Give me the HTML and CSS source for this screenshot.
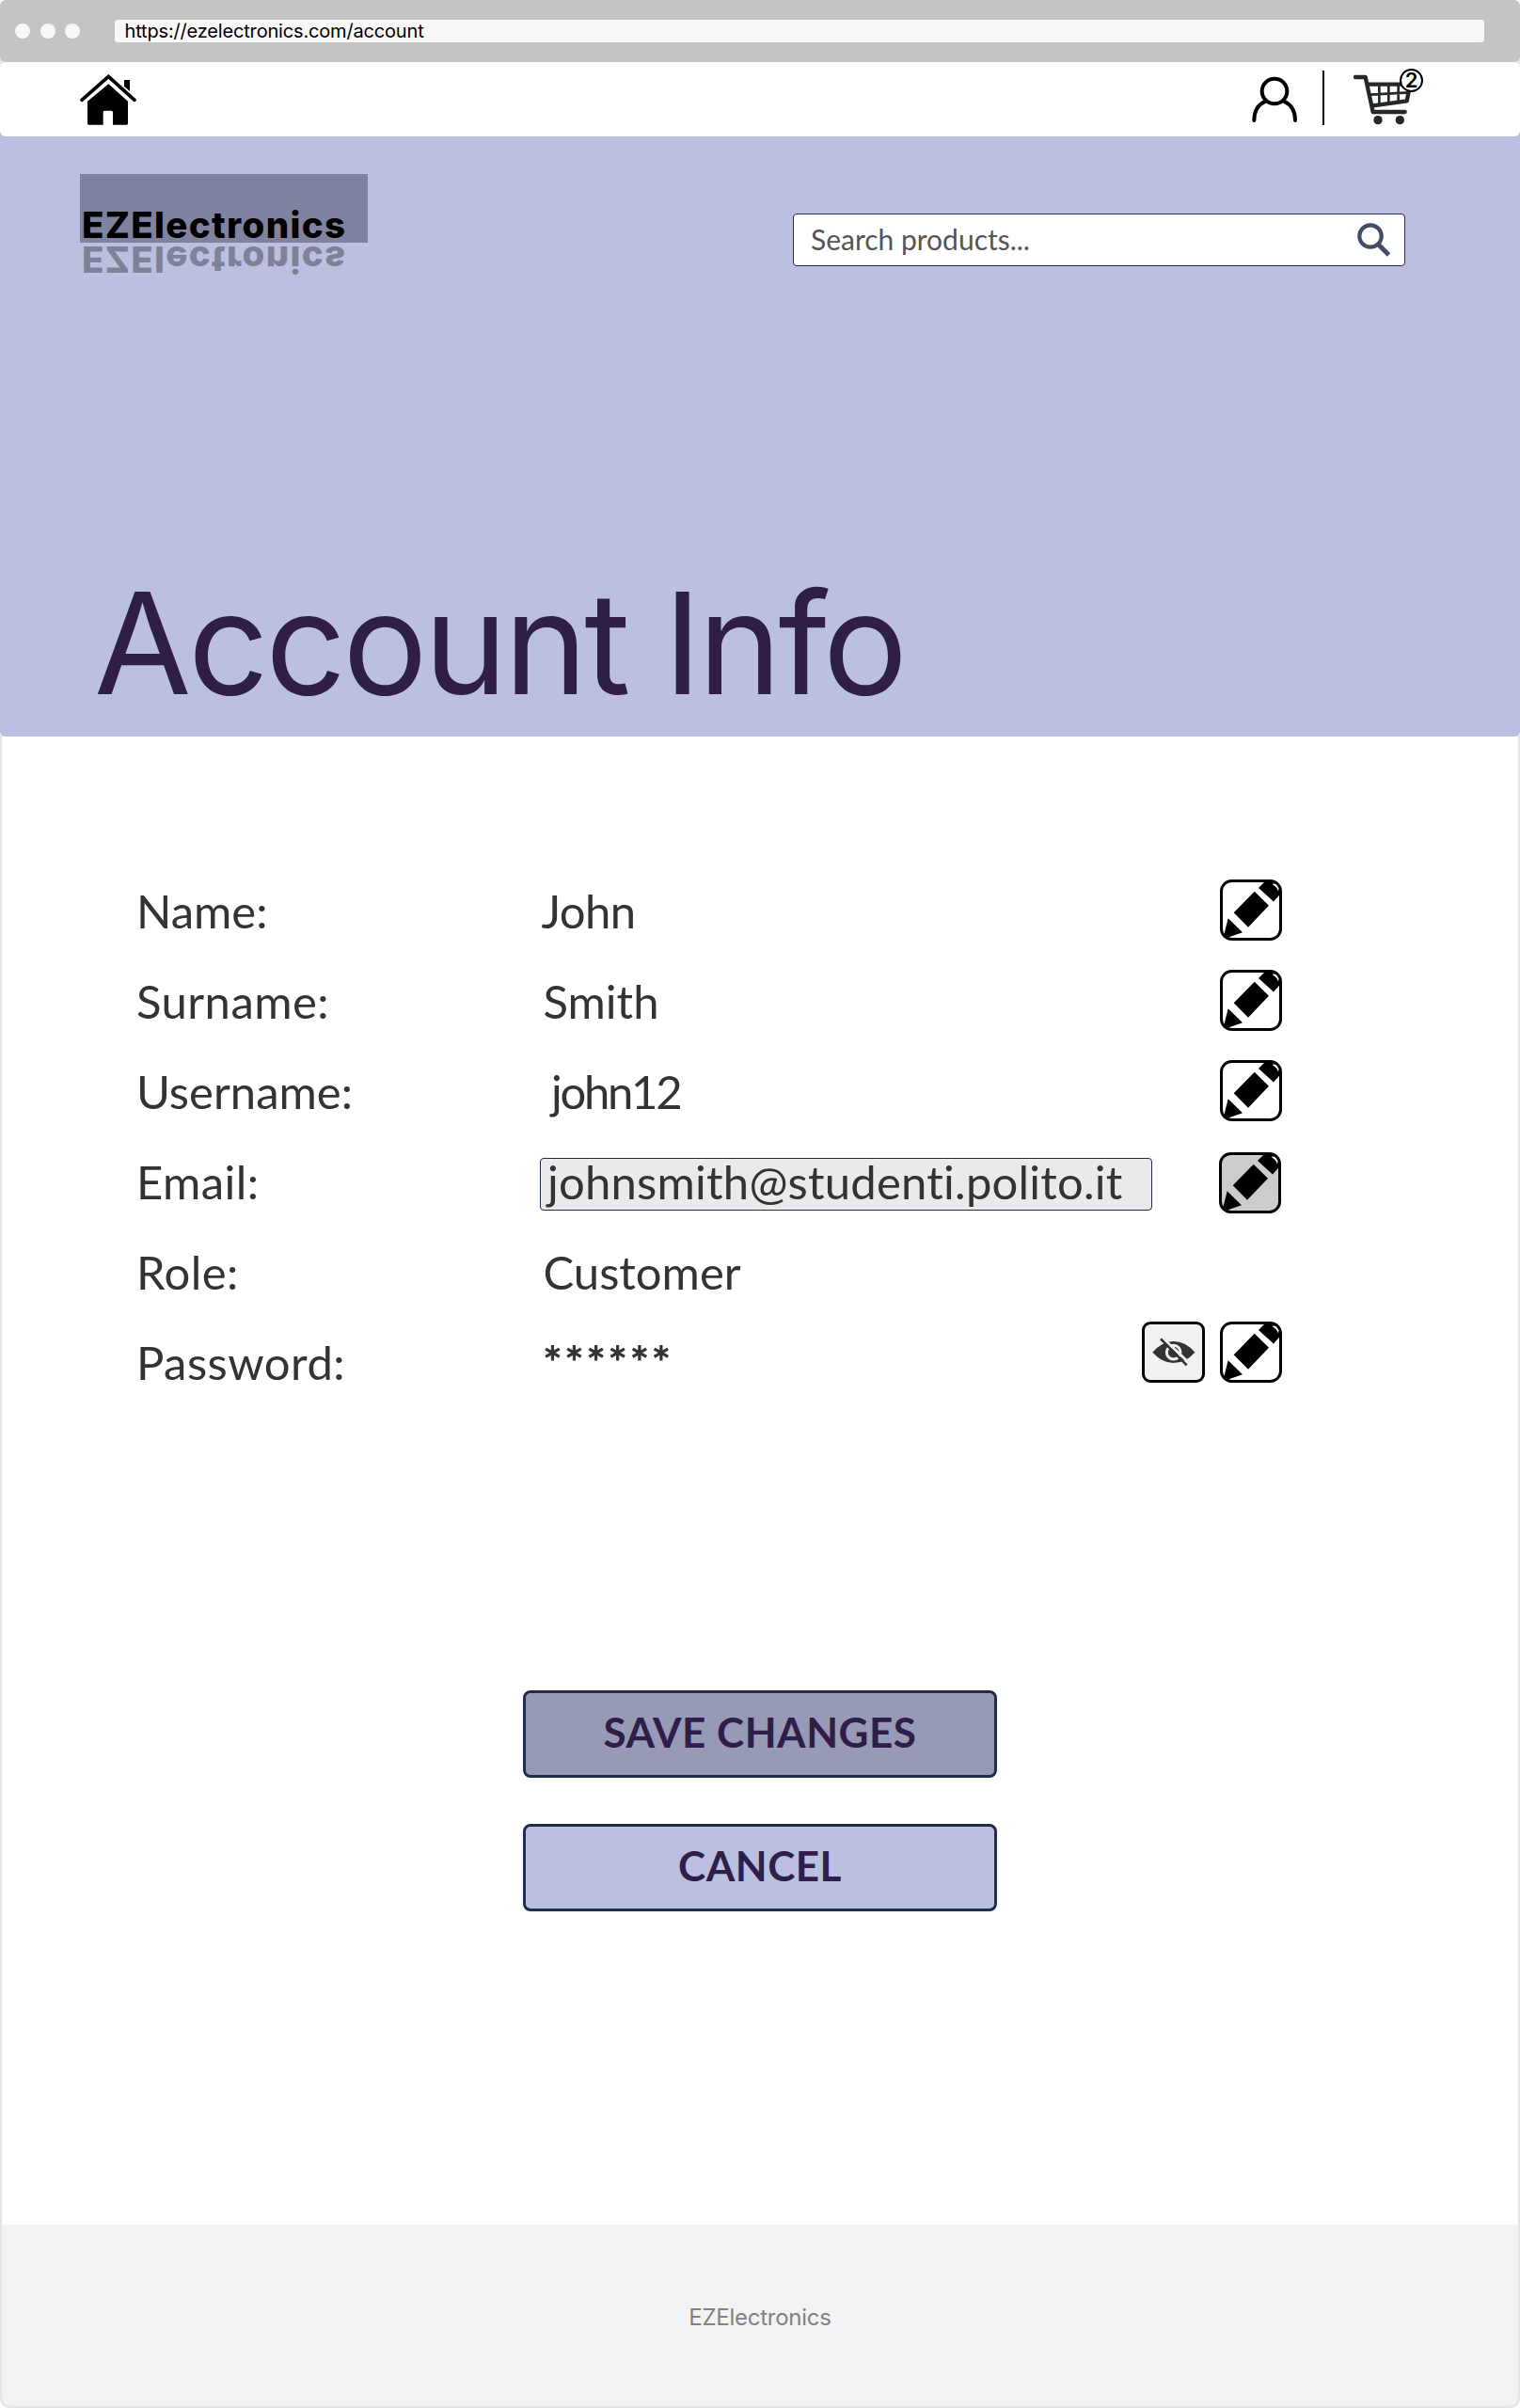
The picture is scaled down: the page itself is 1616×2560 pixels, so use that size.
FILE: index.html
```
<!DOCTYPE html>
<html lang="en">
<head>
<meta charset="utf-8">
<title>Account Info</title>
<link rel="stylesheet" href="styles.css">
</head>
<body>
<svg class="defs" width="0" height="0" aria-hidden="true">
  <symbol id="pencil" viewBox="0 0 66 65">
    <clipPath id="frame"><rect x="1.5" y="1.5" width="63" height="62" rx="11"/></clipPath>
    <g clip-path="url(#frame)">
      <path d="M36.7 12.7 52 27.7 30 50.7 14.7 35.3Z"/>
      <path d="M8.7 41.3 24 56.3 3 63.5Z"/>
      <path d="M50 0 41 9 57 23.500 65 14.500 65 14 59 4.500Z"/>
    </g>
    <path d="M55.500 5 Q60.500 7.500 62 12.500 L63 8 60 4Z" fill="#fff"/>
    <rect x="1.5" y="1.5" width="63" height="62" rx="11" fill="none" stroke="#000" stroke-width="3"/>
  </symbol>
</svg>
<div class="window">
  <header class="chrome">
    <div class="dots"><i></i><i></i><i></i></div>
    <div class="url">https://ezelectronics.com/account</div>
  </header>
  <div class="screen">
    <nav class="nav">
      <a class="home" aria-label="Home">
        <svg width="60" height="54" viewBox="255 237 180 162">
          <path d="M396 255h18v36l-18-15z"/>
          <path d="M261 319 346 244 429 319" fill="none" stroke="#000" stroke-width="11" stroke-linecap="round"/>
          <path d="M346 268 408 323V394q0 4-4 4H360V358q0-5-5-5H334q-5 0-5 5V398H283q-4 0-4-4V323Z"/>
        </svg>
      </a>
      <svg class="user" width="48" height="50" viewBox="94 240 144 150" fill="none" stroke="#000" stroke-width="12" stroke-linecap="round">
        <circle cx="166" cy="288" r="40"/>
        <path d="M101 381C101 350 115 330 137 320M232 381C232 350 218 330 196 320"/>
      </svg>
      <span class="divider"></span>
      <div class="cart">
        <svg width="62" height="54" viewBox="416 237 186 162" fill="none" stroke="#24282a">
          <path d="M422 246H454L478 357H580" stroke-width="13" stroke-linecap="round" stroke-linejoin="round"/>
          <path d="M460 269H597L586 322 478 337" stroke-width="13" stroke-linejoin="round"/>
          <path d="M498 270V330M528 270V325M559 270V322M468 302 592 295" stroke-width="8"/>
          <g fill="#24282a" stroke="none"><circle cx="494" cy="383" r="14"/><circle cx="564" cy="383" r="14"/></g>
        </svg>
        <span class="badge">2</span>
      </div>
    </nav>
    <section class="hero">
      <div class="hero-top">
        <div class="logo">
          <div class="logo-box">EZElectronics</div>
          <div class="logo-mirror" aria-hidden="true">EZElectronics</div>
        </div>
        <div class="search">
          <span>Search products...</span>
          <svg width="36" height="36" viewBox="0 0 36 36" fill="none" stroke="#414d66" stroke-width="4.2">
            <circle cx="14" cy="14" r="11.700"/><path d="M22 22.500 33.500 34" stroke-width="5"/>
          </svg>
        </div>
      </div>
      <h1>Account Info</h1>
    </section>
    <main>
      <dl class="fields">
        <div class="row"><dt>Name:</dt><dd class="first">John</dd><button class="edit" aria-label="Edit name"><svg><use href="#pencil"/></svg></button></div>
        <div class="row"><dt class="loose">Surname:</dt><dd>Smith</dd><button class="edit" aria-label="Edit surname"><svg><use href="#pencil"/></svg></button></div>
        <div class="row"><dt>Username:</dt><dd class="username">john12</dd><button class="edit" aria-label="Edit username"><svg><use href="#pencil"/></svg></button></div>
        <div class="row"><dt class="loose">Email:</dt><dd class="field">johnsmith@studenti.polito.it</dd><button class="edit active" aria-label="Edit email"><svg><use href="#pencil"/></svg></button></div>
        <div class="row"><dt class="loose">Role:</dt><dd>Customer</dd></div>
        <div class="row password"><dt class="loose">Password:</dt><dd class="mask">******</dd>
          <button class="reveal" aria-label="Show password">
            <svg width="46" height="31" viewBox="134 636 138 93">
              <path d="M135 683Q166 648 202 648 240 648 270 683 240 717 202 717 166 717 135 683Z" fill="#333"/>
              <circle cx="202" cy="683" r="22" fill="none" stroke="#f0f2f2" stroke-width="9"/>
              <path d="M161 632 252 717" stroke="#f0f2f2" stroke-width="9"/>
              <path d="M161 640 244 724" stroke="#333" stroke-width="8"/>
            </svg>
          </button>
          <button class="edit" aria-label="Edit password"><svg><use href="#pencil"/></svg></button></div>
      </dl>
      <div class="actions">
        <button class="btn pressed">SAVE CHANGES</button>
        <button class="btn">CANCEL</button>
      </div>
    </main>
    <footer>EZElectronics</footer>
  </div>
</div>
</body>
</html>
```
FILE: styles.css
```
* { box-sizing: border-box; margin: 0; padding: 0; }
body { background: #fff; color: #000; font-family: Inter, sans-serif; }
svg { display: block; }
button { font: inherit; background: none; border: 0; }
.defs { position: absolute; }

.window { width: 1616px; height: 2560px; background: #e5e5e5; border-radius: 6px 6px 10px 10px; overflow: hidden; display: flex; flex-direction: column; }
.chrome { height: 66px; background: #c4c4c4; border-radius: 6px; display: flex; align-items: center; padding: 0 38px 0 16px; flex: none; }
.dots { display: flex; gap: 10.500px; width: 106px; }
.dots i { width: 16px; height: 16px; border-radius: 50%; background: #f8f8f8; }
.url { flex: 1; height: 24px; border-radius: 3px; background: #f8f8f8; padding-left: 10.500px; font-size: 20px; line-height: 24px; letter-spacing: -.17px; }

.screen { flex: 1; display: flex; flex-direction: column; }
.nav { height: 79px; background: #fff; border-radius: 6px; box-shadow: 0 6px 0 #bbc0e1; display: flex; align-items: center; padding: 0 115px 0 85px; z-index: 1; }
.home { margin-right: auto; }
.user { margin-right: 27px; }
.divider { width: 2px; height: 58px; background: #000; margin-top: -3px; margin-right: 31px; }
.cart { position: relative; }
.badge { position: absolute; left: 49px; top: -6px; width: 25px; height: 25px; border: 2px solid #000; border-radius: 50%; background: #fff; font-size: 22px; font-weight: 600; line-height: 21px; text-align: center; }

.hero { height: 638px; background: #bbc0e1; border-radius: 0 0 6px 6px; padding: 40px 122px 0 85px; }
.hero-top { display: flex; justify-content: space-between; height: 408px; }
.logo { width: 306px; font-weight: 800; font-size: 38.500px; letter-spacing: 1.340px; line-height: 46px; }
.logo-box { height: 73px; background: #8083a0; padding: 31px 0 0 2px; }
.logo-mirror { transform: scaleY(-1); padding-left: 2px; margin-top: -5px; opacity: .32; }
.search { width: 651px; height: 56px; margin-top: 42px; background: #fff; border: 1px solid #232a52; border-radius: 4px; display: flex; align-items: center; justify-content: space-between; padding: 0 14px 0 18px; font: 30px Lato, sans-serif; color: #555; }
.search span { margin-top: -3px; }
h1 { font-size: 150px; font-weight: 400; line-height: 182px; letter-spacing: -3.490px; color: #2f1d4a; padding-left: 15px; }

main { width: 1612px; margin: 0 auto; background: #fff; height: 1582px; padding-top: 137px; }
.fields { font: 49px/96px Lato, sans-serif; color: #333; padding: 0 251px 0 143px; }
.row { display: flex; align-items: center; height: 96px; }
dt { width: 429px; }
dt.loose { letter-spacing: .45px; }
dd { flex: 1; padding-left: 3.500px; }
dd.first { padding-left: 1.500px; letter-spacing: -.6px; }
dd.username { padding-left: 12px; letter-spacing: -2.300px; }
dd.field { flex: none; width: 651px; height: 56px; margin: 6px 71px 0 0; padding-left: 7px; border: 1px solid #232a52; border-radius: 4px; background: #eaeaec; line-height: 48px; letter-spacing: .22px; }
dd.mask { padding-left: 3px; letter-spacing: 2.280px; -webkit-text-stroke: 1px #333; }
.edit, .reveal { flex: none; width: 66px; height: 65px; border-radius: 12px; }
.row .edit { margin-top: -2px; }
.edit svg { width: 66px; height: 65px; }
.edit.active { background: #ccc; margin-right: -2px; }
.row .edit.active { margin-top: 2px; }
.reveal { width: 67px; border: 3px solid #000; border-radius: 9px; background: #f0f2f2; display: flex; align-items: center; justify-content: center; margin-right: 16px; }
.row.password button { margin-top: -21px; }

.actions { display: flex; flex-direction: column; align-items: center; gap: 49px; margin-top: 301px; }
.btn { width: 504px; height: 93px; border: 3px solid #232c50; border-radius: 8px; background: #bbc0e1; font: bold 44px/83px Lato, sans-serif; letter-spacing: .5px; color: #2f1d4a; padding-bottom: 4px; }
.btn.pressed { background: #979ab5; }
footer { width: 1612px; height: 193px; margin: 0 auto; background: #f3f3f3; border-radius: 0 0 10px 10px; color: #828282; font-size: 24px; letter-spacing: -.25px; line-height: 197px; text-align: center; }
```
